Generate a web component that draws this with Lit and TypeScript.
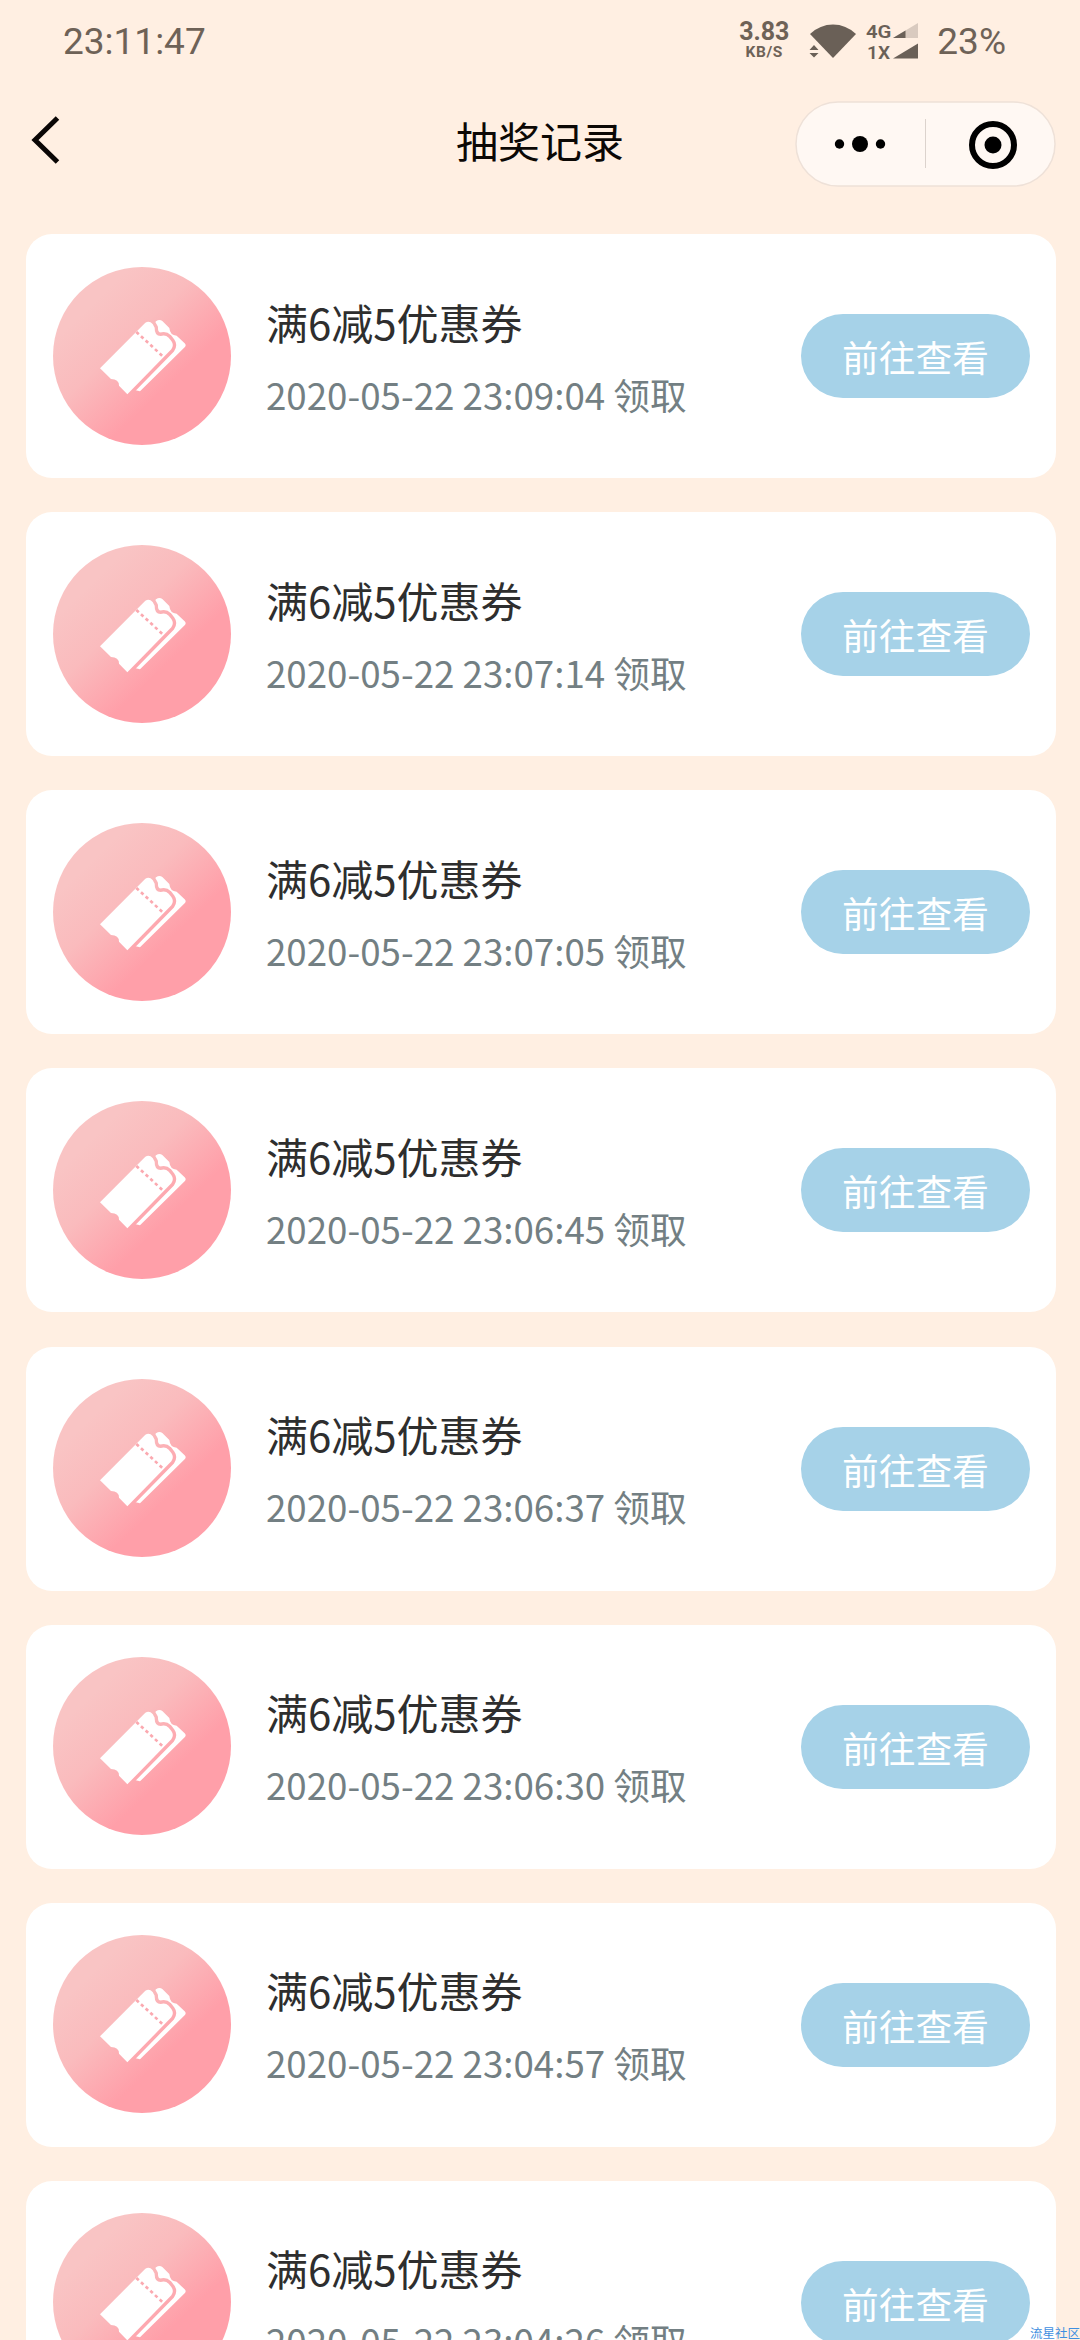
import { LitElement, html, css } from "lit";
import { customElement, property } from "lit/decorators.js";

@customElement("coupon-card")
class CouponCard extends LitElement {
  @property() name = "";
  @property() time = "";

  static styles = css`
    :host {
      display: flex;
      flex: none;
      align-items: center;
      box-sizing: border-box;
      height: 244px;
      padding: 0 26px 0 27px;
      border-radius: 26px;
      background: #fff;
    }
    .badge {
      flex: none;
      width: 178px;
      height: 178px;
      margin-top: -1px;
    }
    .info {
      flex: 1;
      padding: 3px 0 0 35px;
      white-space: nowrap;
    }
    .name {
      height: 72px;
      line-height: 70px;
      font-size: 42px;
      color: #2e2e2e;
    }
    .time {
      height: 70px;
      line-height: 70px;
      font-size: 36.7px;
      color: #737f83;
    }
    .go {
      flex: none;
      width: 229px;
      height: 84px;
      padding: 0;
      border: 0;
      border-radius: 42px;
      background: #a6d2e8;
      color: #fff;
      font: inherit;
      font-size: 36.7px;
      line-height: 84px;
      text-align: center;
    }
  `;

  render() {
    return html`
      <svg class="badge" viewBox="99 138 534 534">
        <defs>
          <linearGradient id="g" gradientUnits="userSpaceOnUse" x1="190" y1="200" x2="560" y2="590">
            <stop offset="0.1" stop-color="#f9c4c4" />
            <stop offset="0.38" stop-color="#fabbbd" />
            <stop offset="0.72" stop-color="#ff9fa9" />
          </linearGradient>
        </defs>
        <circle cx="366" cy="405" r="267" fill="url(#g)" />
        <path fill="#fff" d="M396 314L408 301Q418 294 427 300L448 321Q450 343 470 344L494 367Q500 373 494 379L360 511L344 507L440 390Z" />
        <path
          fill="#fff"
          stroke="url(#g)"
          stroke-width="20"
          stroke-linejoin="round"
          paint-order="stroke"
          d="M240 442L376 305Q388 298 398 309L404 320Q403 344 422 345Q436 340 446 350L454 360Q463 372 454 385L322 520L297 494Q297 474 273 474Z"
        />
        <path fill="none" stroke="#fba9b0" stroke-width="8" stroke-dasharray="10 9" d="M349 333L434 411" />
      </svg>
      <div class="info">
        <div class="name">${this.name}</div>
        <div class="time">${this.time} 领取</div>
      </div>
      <button class="go">前往查看</button>
    `;
  }
}

@customElement("app-root")
class AppRoot extends LitElement {
  static styles = css`
    :host {
      display: flex;
      flex-direction: column;
      position: relative;
      width: 1080px;
      height: 2340px;
      overflow: hidden;
      background: #ffefe2;
      font-family: "Noto Sans CJK SC", sans-serif;
    }
    .status {
      display: flex;
      flex: none;
      align-items: center;
      box-sizing: border-box;
      height: 82px;
      padding: 0 74px 0 63px;
      font-family: Roboto, sans-serif;
      font-size: 37px;
      color: #6e6257;
    }
    .clock {
      flex: 1;
    }
    .speed {
      display: flex;
      flex-direction: column;
      align-items: center;
      width: 50px;
      margin: -4px 20px 0 0;
      font-weight: 700;
      font-size: 25px;
      line-height: 25px;
    }
    .unit {
      font-size: 15.5px;
      line-height: 16px;
      letter-spacing: 0.6px;
    }
    .wifi {
      width: 48px;
      height: 36px;
      margin-right: 9px;
    }
    .cell {
      width: 54px;
      height: 40px;
      margin-right: 17px;
      overflow: visible;
      font-size: 19px;
      font-weight: 600;
    }
    .nav {
      display: grid;
      flex: none;
      grid-template-columns: 1fr auto 1fr;
      align-items: center;
      height: 124px;
      padding: 0 24px;
    }
    .back {
      width: 32px;
      height: 50px;
      margin: 0 0 9px 6px;
    }
    .title {
      margin-bottom: 8px;
      font-size: 42px;
      line-height: 60px;
      color: #0c0805;
    }
    .capsule {
      display: flex;
      justify-self: end;
      width: 261px;
      height: 86px;
    }
    .list {
      display: flex;
      flex-direction: column;
      gap: 34.14px;
      padding: 28px 24px 0 26px;
    }
    .mark {
      position: absolute;
      right: 0;
      bottom: -2px;
      font-size: 12.5px;
      line-height: 18px;
      color: #3f8fe0;
    }
  `;

  private times = [
    "23:09:04",
    "23:07:14",
    "23:07:05",
    "23:06:45",
    "23:06:37",
    "23:06:30",
    "23:04:57",
    "23:04:26",
  ];

  render() {
    return html`
      <div class="status">
        <span class="clock">23:11:47</span>
        <div class="speed"><span>3.83</span><span class="unit">KB/S</span></div>
        <svg class="wifi" viewBox="0 0 48 36" fill="#6a6057">
          <path d="M1 11Q11 1.500 24 1.500Q37 1.500 47 11L24 35Z" />
          <path d="M0 20H5L13 28.500V36H0Z" fill="#ffefe2" />
          <path d="M0.500 27L5 22L9.500 27ZM0.500 30L5 34.500L9.500 30Z" />
        </svg>
        <svg class="cell" viewBox="0 0 54 40" fill="#6a6057">
          <text x="0" y="17" textLength="25.500" lengthAdjust="spacingAndGlyphs">4G</text>
          <text x="1" y="37.500" textLength="23" lengthAdjust="spacingAndGlyphs">1X</text>
          <path d="M27 17L52 2V17Z" fill="#d9cabf" />
          <path d="M27 17L39.500 9.500V17Z" />
          <path d="M27 37.500L52 22.500V37.500Z" />
        </svg>
        <span>23%</span>
      </div>
      <div class="nav">
        <svg class="back" viewBox="0 0 32 50" fill="none" stroke="#0a0605" stroke-width="5">
          <path d="M27.500 3L5 25L27.500 47" />
        </svg>
        <div class="title">抽奖记录</div>
        <svg class="capsule" viewBox="0 0 261 86">
          <rect x="1" y="1" width="259" height="84" rx="42" fill="#fff8f3" stroke="#eee1d8" stroke-width="1.500" />
          <path d="M130.500 18V67" stroke="#dcd3cd" stroke-width="1" />
          <circle cx="44.500" cy="43" r="4.700" />
          <circle cx="65" cy="43" r="8" />
          <circle cx="85.500" cy="43" r="4.700" />
          <circle cx="198" cy="44" r="21" fill="none" stroke="#000" stroke-width="6" />
          <circle cx="198" cy="44" r="8.500" />
        </svg>
      </div>
      <div class="list">
        ${this.times.map(
          (t) => html`<coupon-card name="满6减5优惠券" time="2020-05-22 ${t}"></coupon-card>`
        )}
      </div>
      <div class="mark">流星社区</div>
    `;
  }
}
